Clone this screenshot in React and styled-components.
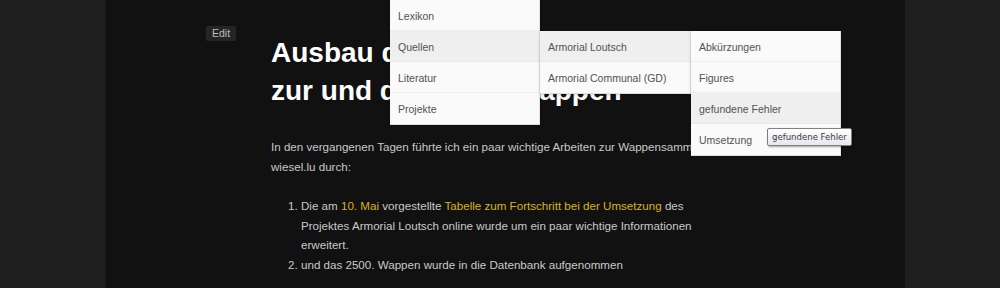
import React from 'react'
import styled, {createGlobalStyle} from 'styled-components'

const GlobalStyle = createGlobalStyle`
html, body{
    margin: 0;
    padding: 0;
    background: #1f1f1f;
    font-family: "Liberation Sans", Arial, sans-serif;
}
`

const Page = styled.div`
display: flex;
min-height: 288px;
overflow: hidden;
`

const Column = styled.div`
position: relative;
margin-left: 106px;
width: 799px;
min-height: 288px;
background: #111111;
box-shadow: -1px 0 0 #1a1a1a;
`

const Nav = styled.nav`
position: absolute;
top: 0;
left: 284px;
z-index: 10;
`

const Menu = styled.ul`
list-style: none;
margin: 0;
padding: 0;
width: ${p => p.width}px;
background: #fafafa;
border-right: 1px solid #e2e2e2;
border-bottom: 1px solid #dcdcdc;
box-shadow: 0 1px 3px rgba(0,0,0,0.18);
box-sizing: border-box;
`

const SubMenu = styled(Menu)`
position: absolute;
top: 0;
left: calc(100% + 1px);
`

const Item = styled.li`
position: relative;
height: 31px;
line-height: 32px;
padding-left: 8px;
font-size: 10.5px;
color: #525252;
background: ${p => p.active ? '#efefef' : 'transparent'};
border-bottom: 1px dotted #e4e4e4;
box-sizing: border-box;
white-space: nowrap;
&:last-child{
    border-bottom: none;
}
`

const Tooltip = styled.div`
position: absolute;
left: 661px;
top: 128px;
z-index: 20;
height: 18px;
line-height: 16px;
padding: 0 4px;
box-sizing: border-box;
border: 1px solid #808080;
border-radius: 2px;
background: linear-gradient(#ffffff, #e6e7ef);
box-shadow: 1px 1px 2px rgba(0,0,0,0.35);
font-family: "DejaVu Sans Condensed", "Liberation Sans", sans-serif;
font-size: 9.5px;
color: #3a3a3a;
white-space: nowrap;
`

const Article = styled.article`
display: flex;
padding-top: 26px;
`

const Gutter = styled.div`
width: 165px;
padding-left: 100px;
box-sizing: border-box;
flex-shrink: 0;
`

const EditButton = styled.span`
display: block;
width: fit-content;
height: 15px;
line-height: 15px;
padding: 0 6px;
background: #252525;
border-radius: 2px;
color: #bdbdbd;
font-size: 10.5px;
`

const Body = styled.div`
width: 455px;
color: #c9c9c9;
font-size: 11.6px;
line-height: 20px;
`

const Title = styled.h1`
margin: 8px 0 0;
font-size: 28px;
line-height: 38px;
font-weight: bold;
color: #ffffff;
`

const Paragraph = styled.p`
margin: 27px 0 19px;
`

const List = styled.ol`
margin: 0;
padding-left: 30px;
li{
    line-height: 19.5px;
}
`

const Link = styled.a`
color: #d9b219;
text-decoration: none;
`

const App = () =>{
    return(
        <>
        <GlobalStyle/>
        <Page>
            <Column>
                <Nav>
                    <Menu width={150}>
                        <Item>Lexikon</Item>
                        <Item active>
                            Quellen
                            <SubMenu width={151}>
                                <Item active>
                                    Armorial Loutsch
                                    <SubMenu width={150}>
                                        <Item>Abkürzungen</Item>
                                        <Item>Figures</Item>
                                        <Item active>gefundene Fehler</Item>
                                        <Item>Umsetzung</Item>
                                    </SubMenu>
                                </Item>
                                <Item>Armorial Communal (GD)</Item>
                            </SubMenu>
                        </Item>
                        <Item>Literatur</Item>
                        <Item>Projekte</Item>
                    </Menu>
                </Nav>
                <Tooltip>gefundene Fehler</Tooltip>
                <Article>
                    <Gutter>
                        <EditButton>Edit</EditButton>
                    </Gutter>
                    <Body>
                        <Title>Ausbau der Fortschrittstabellen zur und das 2500. Wappen</Title>
                        <Paragraph>In den vergangenen Tagen führte ich ein paar wichtige Arbeiten zur Wappensammlung wiesel.lu durch:</Paragraph>
                        <List>
                            <li>Die am <Link href="#">10. Mai</Link> vorgestellte <Link href="#">Tabelle zum Fortschritt bei der Umsetzung</Link> des Projektes Armorial Loutsch online wurde um ein paar wichtige Informationen erweitert.</li>
                            <li>und das 2500. Wappen wurde in die Datenbank aufgenommen</li>
                        </List>
                    </Body>
                </Article>
            </Column>
        </Page>
        </>
    )
}

export default App
